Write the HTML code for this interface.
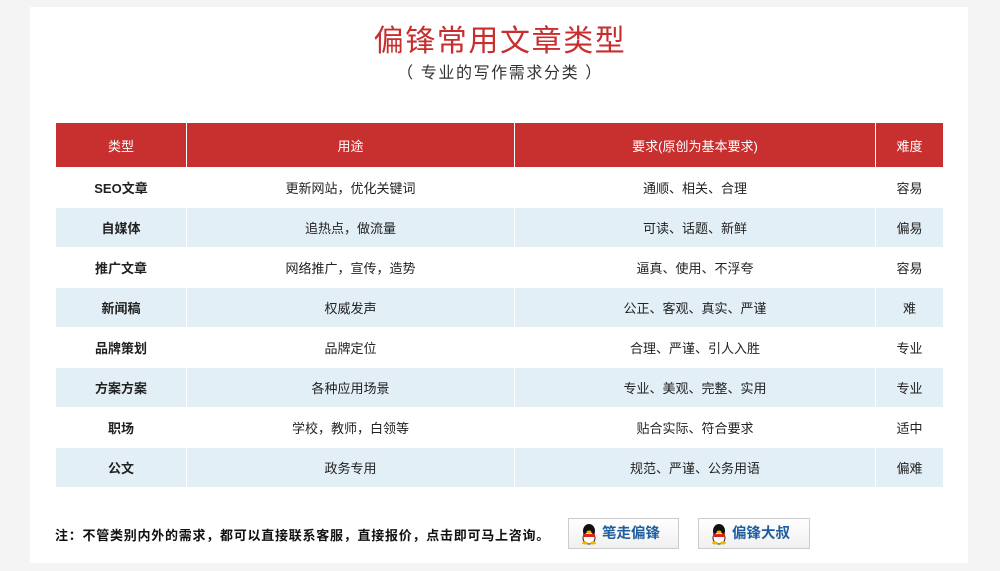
<!DOCTYPE html>
<html><head><meta charset="utf-8"><style>
body{margin:0;background:#f4f4f4;font-family:"Liberation Sans","Noto Sans CJK SC",sans-serif;width:1000px;height:571px;overflow:hidden;position:relative}
.card{position:absolute;left:30px;top:7px;width:938px;height:556px;background:#fff}
.t1{position:absolute;left:0;width:1000px;top:22px;text-align:center;font-size:30px;color:#c82e2e;letter-spacing:1.6px;line-height:40px}
.t2{position:absolute;left:0;width:1000px;top:63px;text-align:center;font-size:16px;color:#333;letter-spacing:1.6px;line-height:22px}
table{position:absolute;left:55px;top:123px;border-collapse:collapse;font-size:13px;color:#222}
td{text-align:center;border:1px solid #fff;height:39px;padding:0}
tr.h td{background:#c83030;color:#fff;height:44px;border-top:none}
tr:nth-child(odd):not(.h) td{background:#e3eff6}
td.b{font-weight:bold}
.note{position:absolute;left:55px;top:525px;font-size:13px;font-weight:bold;color:#111;letter-spacing:0.75px}
.btn{position:absolute;top:518px;width:111px;height:31px;border:1px solid #ccc;background:linear-gradient(#fff,#f0f0f0);font-size:14.5px;font-weight:bold;color:#1f5e9e;line-height:30px;box-sizing:border-box}
.btn svg{position:absolute;left:11px;top:4px}
.btn span{position:absolute;left:33px}
</style></head><body>
<div class="card"></div>
<div class="t1">偏锋常用文章类型</div>
<div class="t2">（ 专业的写作需求分类 ）</div>
<table>
<tr class="h"><td style="width:130px">类型</td><td style="width:327px">用途</td><td style="width:360px">要求(原创为基本要求)</td><td style="width:67px">难度</td></tr>
<tr><td class="b">SEO文章</td><td>更新网站，优化关键词</td><td>通顺、相关、合理</td><td>容易</td></tr>
<tr><td class="b">自媒体</td><td>追热点，做流量</td><td>可读、话题、新鲜</td><td>偏易</td></tr>
<tr><td class="b">推广文章</td><td>网络推广，宣传，造势</td><td>逼真、使用、不浮夸</td><td>容易</td></tr>
<tr><td class="b">新闻稿</td><td>权威发声</td><td>公正、客观、真实、严谨</td><td>难</td></tr>
<tr><td class="b">品牌策划</td><td>品牌定位</td><td>合理、严谨、引人入胜</td><td>专业</td></tr>
<tr><td class="b">方案方案</td><td>各种应用场景</td><td>专业、美观、完整、实用</td><td>专业</td></tr>
<tr><td class="b">职场</td><td>学校，教师，白领等</td><td>贴合实际、符合要求</td><td>适中</td></tr>
<tr><td class="b">公文</td><td>政务专用</td><td>规范、严谨、公务用语</td><td>偏难</td></tr>
</table>
<div class="note">注：不管类别内外的需求，都可以直接联系客服，直接报价，点击即可马上咨询。</div>
<div class="btn" style="left:568px"><svg width="18" height="22" viewBox="0 0 18 22"><ellipse cx="9" cy="8" rx="6" ry="7" fill="#111"/><ellipse cx="9" cy="15" rx="6" ry="6" fill="#fff" stroke="#222"/><rect x="3" y="11" width="12" height="3" fill="#d22"/><ellipse cx="9" cy="9" rx="2.5" ry="1.5" fill="#f5b400"/><ellipse cx="5" cy="20" rx="3" ry="1.5" fill="#f5b400"/><ellipse cx="13" cy="20" rx="3" ry="1.5" fill="#f5b400"/></svg><span>笔走偏锋</span></div>
<div class="btn" style="left:698px;width:112px"><svg width="18" height="22" viewBox="0 0 18 22"><ellipse cx="9" cy="8" rx="6" ry="7" fill="#111"/><ellipse cx="9" cy="15" rx="6" ry="6" fill="#fff" stroke="#222"/><rect x="3" y="11" width="12" height="3" fill="#d22"/><ellipse cx="9" cy="9" rx="2.5" ry="1.5" fill="#f5b400"/><ellipse cx="5" cy="20" rx="3" ry="1.5" fill="#f5b400"/><ellipse cx="13" cy="20" rx="3" ry="1.5" fill="#f5b400"/></svg><span>偏锋大叔</span></div>
</body></html>
